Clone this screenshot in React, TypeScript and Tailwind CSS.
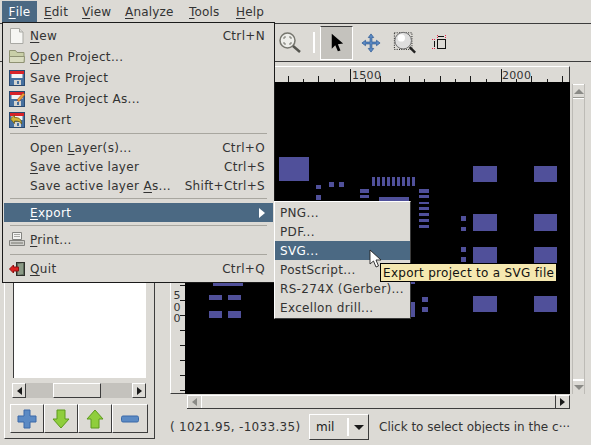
import type { ReactNode } from 'react'

// pads as page coords [x, y, w, h]; canvas origin is 185,82
const PADS: number[][] = [
  [279, 157, 30, 24], [473, 166, 24, 16], [534, 166, 23, 16],
  [316, 185, 5, 4], [329, 182, 5, 5], [339, 182, 5, 5], [316, 195, 5, 5],
  [372, 177, 3, 9], [377, 177, 3, 9], [382, 177, 3, 9], [387, 177, 3, 9], [392, 177, 3, 9],
  [397, 177, 3, 9], [402, 177, 3, 9], [407, 177, 3, 9], [412, 177, 3, 9],
  [360, 189, 9, 4], [360, 195, 9, 3], [419, 189, 10, 4], [419, 195, 10, 3],
  [379, 197, 30, 4], [419, 202, 10, 2], [419, 207, 10, 3], [419, 213, 10, 3],
  [419, 219, 10, 3], [419, 225, 10, 3],
  [461, 216, 5, 5], [461, 227, 5, 4], [473, 214, 24, 17], [534, 214, 23, 17],
  [461, 247, 5, 5], [461, 257, 5, 5], [473, 247, 24, 16], [534, 247, 23, 16],
  [422, 297, 6, 5], [422, 307, 6, 5], [473, 296, 24, 16], [534, 296, 23, 16],
  [410, 302, 5, 15], [410, 282, 5, 2],
  [213, 283, 30, 3], [209, 295, 13, 5], [228, 295, 13, 5], [209, 311, 13, 7], [228, 311, 13, 7],
]

const HTICKS = [288, 303, 318, 334, 350, 365, 380, 394, 409, 424, 440, 455, 470, 486, 501, 516, 531, 547, 562]
const VTICKS = [90, 105, 120, 135, 150, 165, 180, 195, 210, 225, 240, 255, 270, 285, 300, 315, 330, 345, 360, 375, 390]

function U({ children }: { children: ReactNode }) {
  return <span className="underline underline-offset-2 decoration-1">{children}</span>
}

function FileIcon() {
  return (
    <svg width="16" height="16" viewBox="0 0 16 16">
      <path d="M1.500 0.500h9l3.500 3.500v11.500h-12.500z" fill="#f6f6f3" stroke="#a9a9a4" />
      <path d="M10.500 0.500v3.500h3.500" fill="#dcdcd8" stroke="#a9a9a4" />
    </svg>
  )
}

function FolderIcon() {
  return (
    <svg width="16" height="16" viewBox="0 0 16 16">
      <path d="M0.500 1.500h6l1.500 2h7v10h-14.500z" fill="#c9cfa8" stroke="#8f9273" />
      <path d="M0.500 7.500h15l-0.500 6h-14.500z" fill="#d9dcc0" stroke="#8f9273" />
    </svg>
  )
}

function FloppyIcon({ pencil, arrow }: { pencil?: boolean; arrow?: boolean }) {
  return (
    <svg width="16" height="16" viewBox="0 0 16 16">
      <rect x="0.500" y="0.500" width="15" height="15" fill="#46709f" stroke="#2b4a70" />
      <rect x="1" y="1" width="14" height="3" fill="#d8232a" />
      <rect x="2.500" y="4" width="11" height="4" fill="#f4f4f4" />
      <rect x="5" y="10" width="7" height="5" fill="#d4d4d0" />
      <rect x="8" y="11" width="2" height="3" fill="#46709f" />
      {pencil && <path d="M8 9l6-7 2 1.500-6 7z" fill="#e8a33a" stroke="#b5401c" strokeWidth="0.600" />}
      {arrow && <path d="M1.500 7l4-4v2.500c4 0 7 1 7 6.500-1-2.500-3-3-7-3v2.500z" fill="#d3b53a" stroke="#6d5a10" strokeWidth="0.800" />}
    </svg>
  )
}

function PrintIcon() {
  return (
    <svg width="16" height="16" viewBox="0 0 16 16">
      <path d="M3.500 0.500h9v7h-9z" fill="#f4f4f2" stroke="#83837f" />
      <path d="M5 2.500h6M5 4.500h6" stroke="#a8a8a4" />
      <path d="M0.500 8.500h15v5h-15z" fill="#cfcfcb" stroke="#83837f" />
      <path d="M2 11h12" stroke="#77776f" />
    </svg>
  )
}

function QuitIcon() {
  return (
    <svg width="16" height="16" viewBox="0 0 16 16">
      <rect x="7.500" y="1.500" width="8" height="13" fill="#5c6a5a" stroke="#2e2e2a" />
      <path d="M9 3l5-1v11l-5 1z" fill="#8b9a86" />
      <path d="M0.500 8l4-4v2h5v4h-5v2z" fill="#dc1f1f" stroke="#8d1010" />
    </svg>
  )
}

function MenuRow({ h, icon, label, accel, active, arrow }: {
  h: string
  icon?: ReactNode
  label: ReactNode
  accel?: string
  active?: boolean
  arrow?: boolean
}) {
  return (
    <div className={`flex items-center pl-[5px] pr-[8px] tracking-[0.33px] ${h} ${active ? 'bg-[#4b6983] text-white' : 'text-[#333333]'}`}>
      <span className="w-[16px] flex justify-center">{icon}</span>
      <span className="ml-[5px] flex-1 whitespace-nowrap">{label}</span>
      {accel && <span className="whitespace-nowrap">{accel}</span>}
      {arrow && <span className="w-0 h-0 border-y-[5px] border-y-transparent border-l-[6px] border-l-white" />}
    </div>
  )
}

function MenuSep({ h }: { h: string }) {
  return (
    <div className={`flex items-center px-[6px] ${h}`}>
      <div className="h-[2px] w-full border-t border-[#a8a69f] border-b-white" />
    </div>
  )
}

function Arrow({ dir, color = 'border-t-[#1a1a1a]' }: { dir: 'left' | 'right' | 'up' | 'down'; color?: string }) {
  if (dir === 'left') return <span className="w-0 h-0 border-y-[4px] border-y-transparent border-r-[5px] border-r-[#1a1a1a]" />
  if (dir === 'right') return <span className="w-0 h-0 border-y-[4px] border-y-transparent border-l-[5px] border-l-[#1a1a1a]" />
  if (dir === 'up') return <span className="w-0 h-0 border-x-[5px] border-x-transparent border-b-[5px] border-b-[#8a8a86]" />
  return <span className={`w-0 h-0 border-x-[5px] border-x-transparent border-t-[5px] ${color}`} />
}

function ToolButton({ children, w }: { children: ReactNode; w: string }) {
  return (
    <button className={`${w} h-full flex items-center justify-center bg-[#dcdad5] border-t border-l border-t-white border-l-white border-r border-b border-r-[#3c3c3c] border-b-[#3c3c3c]`}>
      {children}
    </button>
  )
}

export default function App() {
  return (
    <div className="relative w-[591px] h-[445px] overflow-hidden bg-[#dcdad5] text-[12px] leading-none text-[#333333] font-['DejaVu_Sans',sans-serif] flex flex-col">
      {/* menu bar */}
      <div className="h-[23px] flex items-center pl-[2px] tracking-[0.2px]">
        <div className="h-[21px] w-[35px] bg-[#4b6983] text-white flex items-center justify-center"><U>F</U>ile</div>
        <div className="ml-[7px] w-[38px]"><U>E</U>dit</div>
        <div className="w-[43px]"><U>V</U>iew</div>
        <div className="w-[64px]"><U>A</U>nalyze</div>
        <div className="w-[47px]"><U>T</U>ools</div>
        <div><U>H</U>elp</div>
      </div>

      {/* toolbar */}
      <div className="h-[39px] border-y border-t-[#3c3c3c] border-b-[#3c3c3c] flex items-center pl-[279px]">
        <svg width="22" height="22" viewBox="0 0 22 22">
          <circle cx="8.500" cy="8.500" r="7.500" fill="#eeeeea" stroke="#77776f" strokeWidth="1.500" />
          <path d="M5 7V5h2M10 5h2v2M12 10v2h-2M7 12H5v-2" fill="none" stroke="#77776f" />
          <path d="M14 14l7 6" stroke="#55554f" strokeWidth="2.500" />
        </svg>
        <div className="ml-[12px] w-[2px] h-[21px] bg-white" />
        <div className="ml-[5px] w-[33px] h-[34px] bg-[#c4c2bd] border-l border-t border-b border-r border-l-white border-b-white border-r-white border-t-[#3c3c3c] flex items-center justify-center">
          <svg width="14" height="21" viewBox="0 0 16 22">
            <path d="M2 1v17l4-4 3 7 3-1-3-7 6-1z" fill="#000" />
          </svg>
        </div>
        <svg className="ml-[8px]" width="20" height="20" viewBox="0 0 22 22">
          <path d="M11 1l3 4h-2v5h5V8l4 3-4 3v-2h-5v5h2l-3 4-3-4h2v-5H5v2l-4-3 4-3v2h5V5H8z" fill="#5b8ac4" stroke="#2f5b96" strokeWidth="0.800" />
        </svg>
        <svg className="ml-[12px]" width="24" height="23" viewBox="0 0 26 24">
          <rect x="1.500" y="1.500" width="19" height="18" fill="none" stroke="#000" strokeDasharray="1 1.500" />
          <circle cx="11" cy="10" r="9" fill="#dedede" stroke="#666" />
          <circle cx="9" cy="7" r="4" fill="#fff" />
          <path d="M18 17l6 6" stroke="#222" strokeWidth="2.500" />
        </svg>
        <svg className="ml-[15px]" width="16" height="17" viewBox="0 0 16 17">
          <rect x="5.500" y="5.500" width="8" height="9" fill="none" stroke="#111" />
          <path d="M5.500 1v3M13.500 1v3M0 5.500h3M0 14.500h3" stroke="#e8254a" strokeDasharray="1 1" />
          <path d="M6 2.500h6M2.500 7v6" stroke="#111" />
        </svg>
      </div>

      {/* body */}
      <div className="flex-1 flex pl-[4px] pr-[6px]">
        {/* layers panel */}
        <div className="w-[151px] mb-[6px] mt-[4px] pt-[8px] pb-[5px] pl-[5px] pr-[6px] border-l border-l-white border-r border-b border-r-[#3c3c3c] border-b-[#3c3c3c] flex flex-col">
          <div className="flex-1 ml-[3px] mr-[2px] bg-white border-l border-t border-[#3c3c3c]" />
          <div className="mt-[5px] h-[15px] ml-[2px] mr-[2px] bg-[#c4c2bd] flex items-stretch">
            <div className="w-[14px] flex items-center justify-center bg-[#dcdad5] border-t border-l border-t-white border-l-white border-r border-b border-r-[#3c3c3c] border-b-[#3c3c3c]"><Arrow dir="left" /></div>
            <div className="ml-[27px] w-[48px] bg-[#dcdad5] border-t border-l border-t-white border-l-white border-r border-b border-r-[#3c3c3c] border-b-[#3c3c3c]" />
            <div className="flex-1" />
            <div className="w-[14px] flex items-center justify-center bg-[#dcdad5] border-t border-l border-t-white border-l-white border-r border-b border-r-[#3c3c3c] border-b-[#3c3c3c]"><Arrow dir="right" /></div>
          </div>
          <div className="mt-[6px] h-[29px] flex">
            <ToolButton w="w-[34px]">
              <svg width="20" height="20" viewBox="0 0 20 20"><path d="M7 1h6v6h6v6h-6v6H7v-6H1V7h6z" fill="#5b8ac4" stroke="#3a69a8" /></svg>
            </ToolButton>
            <ToolButton w="w-[34px]">
              <svg width="18" height="20" viewBox="0 0 18 20"><path d="M5 1h8v9h4l-8 9-8-9h4z" fill="#8fce3c" stroke="#5c9a1c" /></svg>
            </ToolButton>
            <ToolButton w="w-[34px]">
              <svg width="18" height="20" viewBox="0 0 18 20"><path d="M9 1l8 9h-4v9H5v-9H1z" fill="#8fce3c" stroke="#5c9a1c" /></svg>
            </ToolButton>
            <ToolButton w="w-[36px]">
              <svg width="18" height="8" viewBox="0 0 18 8"><rect x="0.500" y="1" width="17" height="6" rx="1.500" fill="#5b8ac4" stroke="#3a69a8" /></svg>
            </ToolButton>
          </div>
        </div>

        {/* main area */}
        <div className="ml-[15px] flex-1 flex flex-col pt-[4px]">
          <div className="flex flex-1 min-h-0">
            <div className="flex-1 flex flex-col">
              {/* horizontal ruler */}
              <div className="relative h-[16px] ml-[15px] border-t border-white border-r border-r-[#3c3c3c]">
                {HTICKS.map((x, i) => (
                  <div
                    key={x}
                    className="absolute bottom-0 w-px bg-[#1a1a1a]"
                    style={{ left: x - 185, height: i === 4 || i === 14 ? 13 : i % 2 === 0 ? 6 : 3 }}
                  />
                ))}
                <span className="absolute left-[167px] top-[3px] text-[11px] tracking-[0.3px]">1500</span>
                <span className="absolute left-[317px] top-[3px] text-[11px] tracking-[0.3px]">2000</span>
              </div>
              <div className="flex-1 flex min-h-0">
                {/* vertical ruler */}
                <div className="relative w-[15px] border-l border-white border-b border-b-[#3c3c3c]">
                  {VTICKS.map((y) => (
                    <div key={y} className="absolute right-0 h-px w-[5px] bg-[#1a1a1a]" style={{ top: y - 82 }} />
                  ))}
                  <div className="absolute left-[1px] top-[209px] flex flex-col items-center gap-[1px] text-[11px] leading-[10.500px] w-[10px]">
                    <span>5</span>
                    <span>0</span>
                    <span>0</span>
                  </div>
                </div>
                {/* board canvas */}
                <div className="relative flex-1 bg-black">
                  {PADS.map(([x, y, w, h], i) => (
                    <div key={i} className="absolute bg-[#50509a]" style={{ left: x - 185, top: y - 82, width: w, height: h }} />
                  ))}
                </div>
              </div>
            </div>
            {/* vertical scrollbar */}
            <div className="ml-[2px] w-[13px] mt-[18px] flex flex-col bg-[#dcdad5] border-l border-r border-[#bdbbb6]">
              <div className="h-[14px] flex items-center justify-center border-b border-[#9a9a94] border-t border-t-white"><Arrow dir="up" /></div>
              <div className="flex-1 border-y border-white" />
              <div className="h-[14px] flex items-center justify-center border-t border-white"><Arrow dir="down" color="border-t-[#8a8a86]" /></div>
            </div>
          </div>
          {/* horizontal scrollbar */}
          <div className="h-[14px] mt-[1px] ml-[17px] mr-[15px] flex border-b border-[#3c3c3c]">
            <div className="w-[14px] flex items-center justify-center border-t border-l border-white bg-[#d2d0cb]"><span className="w-0 h-0 border-y-[4px] border-y-transparent border-r-[5px] border-r-[#8a8a86]" /></div>
            <div className="flex-1 border-t border-l border-white border-r border-r-[#3c3c3c]" />
            <div className="w-[14px] flex items-center justify-center border-t border-white border-r border-r-[#3c3c3c]"><Arrow dir="right" /></div>
          </div>
          {/* status line */}
          <div className="h-[36px] flex items-center">
            <span className="w-[139px] whitespace-nowrap tracking-[0.3px]">( 1021.95, -1033.35)</span>
            <div className="w-[60px] h-[26px] flex items-center pl-[6px] border-t border-l border-t-white border-l-white border-r border-b border-r-[#3c3c3c] border-b-[#3c3c3c]">
              <span className="flex-1 text-[#1a1a1a]">mil</span>
              <span className="w-[2px] h-[18px] bg-white" />
              <span className="w-[19px] flex justify-center"><Arrow dir="down" /></span>
            </div>
            <span className="ml-[10px] whitespace-nowrap overflow-hidden">Click to select objects in the c···</span>
          </div>
        </div>
      </div>

      {/* File menu */}
      <div className="absolute left-[2px] top-[22px] w-[273px] h-[261px] bg-[#dcdad5] border border-[#1a1a1a] pt-[2px] px-px">
        <MenuRow h="h-[21px]" icon={<FileIcon />} label={<><U>N</U>ew</>} accel="Ctrl+N" />
        <MenuRow h="h-[21px]" icon={<FolderIcon />} label={<><U>O</U>pen Project...</>} />
        <MenuRow h="h-[21px]" icon={<FloppyIcon />} label="Save Project" />
        <MenuRow h="h-[21px]" icon={<FloppyIcon pencil />} label="Save Project As..." />
        <MenuRow h="h-[21px]" icon={<FloppyIcon arrow />} label={<><U>R</U>evert</>} />
        <MenuSep h="h-[8px]" />
        <MenuRow h="h-[19px]" label={<>Open <U>L</U>ayer(s)...</>} accel="Ctrl+O" />
        <MenuRow h="h-[19px]" label={<><U>S</U>ave active layer</>} accel="Ctrl+S" />
        <MenuRow h="h-[19px]" label={<>Save active layer <U>A</U>s...</>} accel="Shift+Ctrl+S" />
        <MenuSep h="h-[8px]" />
        <MenuRow h="h-[19px]" label={<><U>E</U>xport</>} active arrow />
        <MenuSep h="h-[8px]" />
        <MenuRow h="h-[20px]" icon={<PrintIcon />} label={<><U>P</U>rint...</>} />
        <MenuSep h="h-[9px]" />
        <MenuRow h="h-[20px]" icon={<QuitIcon />} label={<><U>Q</U>uit</>} accel="Ctrl+Q" />
      </div>

      {/* Export submenu */}
      <div className="absolute left-[274px] top-[201px] w-[137px] bg-[#dcdad5] border border-t-white border-l-white border-r-[#3c3c3c] border-b-[#3c3c3c] py-px">
        {['PNG...', 'PDF...', 'SVG...', 'PostScript...', 'RS-274X (Gerber)...', 'Excellon drill...'].map((label) => (
          <div
            key={label}
            className={`h-[19px] flex items-center pl-[5px] whitespace-nowrap tracking-[0.33px] ${label === 'SVG...' ? 'bg-[#4b6983] text-white' : 'text-[#333333]'}`}
          >
            {label}
          </div>
        ))}
      </div>

      {/* tooltip */}
      <div className="absolute left-[380px] top-[263px] h-[19px] px-[2px] flex items-center bg-[#f5e8b0] border border-black text-[#111] whitespace-nowrap tracking-[0.3px]">
        Export project to a SVG file
      </div>

      {/* mouse pointer */}
      <svg className="absolute left-[369px] top-[249px]" width="14" height="20" viewBox="0 0 14 20">
        <path d="M1 1v14l3.500-3 2.500 6 2.500-1-2.500-6H12z" fill="#fff" stroke="#222" strokeWidth="0.900" />
      </svg>
    </div>
  )
}
